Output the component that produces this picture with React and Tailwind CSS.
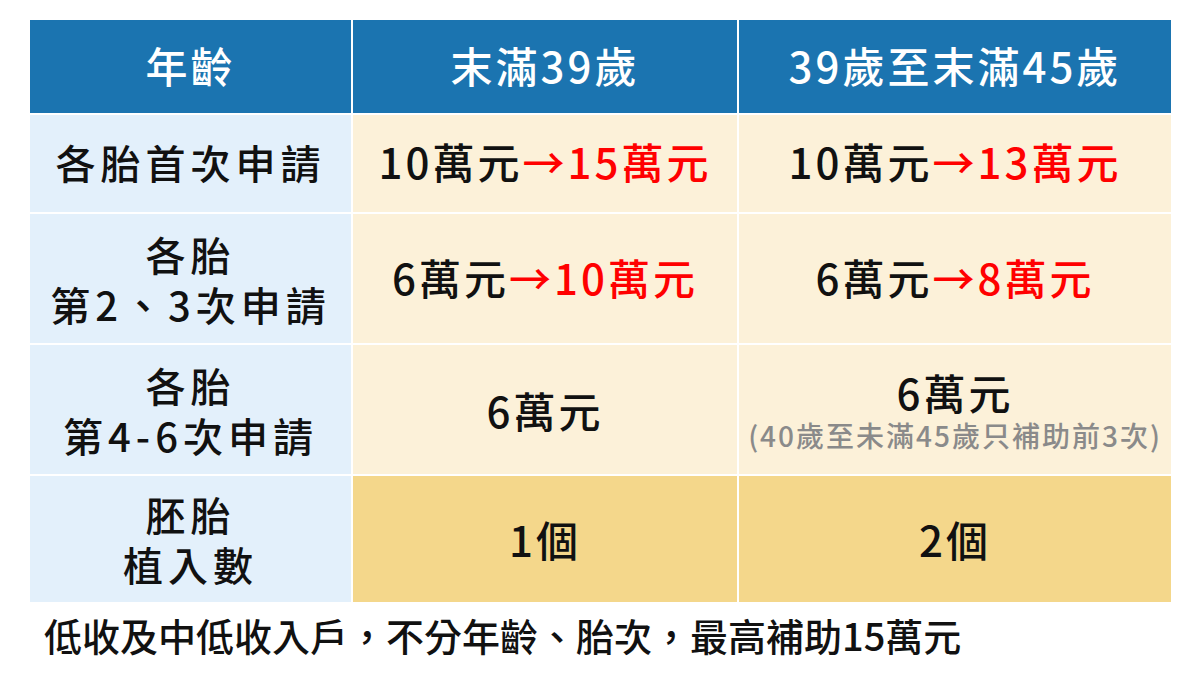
const font = { fontFamily: '"Noto Sans CJK TC", "Noto Sans", sans-serif' }

function Cell({ className = '', children }) {
  return (
    <div className={`flex flex-col items-center justify-center text-center ${className}`}>
      {children}
    </div>
  )
}

function Change({ from, to }) {
  return (
    <span>
      {from}
      <span className="text-[#ff0000]">→{to}</span>
    </span>
  )
}

// value / header cells are a touch larger than the first column
const big = 'text-[42px] tracking-[3px]'

export default function App() {
  return (
    <div lang="zh-Hant-TW" className="h-[675px] w-[1200px] bg-white pt-[20px] pl-[30px]" style={font}>
      <div className="grid w-[1141px] grid-cols-[321px_384px_432px] grid-rows-[93px_97px_129px_129px_126px] gap-[2px] text-[40px] font-medium leading-[50px] tracking-[2px] text-[#111]">
        <Cell className={`bg-[#1b74b0] pb-[4px] text-white ${big}`}>年齡</Cell>
        <Cell className={`bg-[#1b74b0] pb-[4px] text-white ${big}`}>末滿39歲</Cell>
        <Cell className={`bg-[#1b74b0] pb-[4px] text-white ${big}`}>39歲至末滿45歲</Cell>

        <Cell className="bg-[#e3f0fb] pb-[4px] tracking-[5px]">各胎首次申請</Cell>
        <Cell className={`bg-[#fcf1d9] pb-[6px] ${big}`}><Change from="10萬元" to="15萬元" /></Cell>
        <Cell className={`bg-[#fcf1d9] pb-[6px] ${big}`}><Change from="10萬元" to="13萬元" /></Cell>

        <Cell className="bg-[#e3f0fb] tracking-[5px]">
          <div>各胎</div>
          <div>第2、3次申請</div>
        </Cell>
        <Cell className={`bg-[#fcf1d9] pb-[4px] ${big}`}><Change from="6萬元" to="10萬元" /></Cell>
        <Cell className={`bg-[#fcf1d9] pb-[4px] ${big}`}><Change from="6萬元" to="8萬元" /></Cell>

        <Cell className="bg-[#e3f0fb] tracking-[5px]">
          <div>各胎</div>
          <div>第4-6次申請</div>
        </Cell>
        <Cell className={`bg-[#fcf1d9] ${big}`}>6萬元</Cell>
        <Cell className="bg-[#fcf1d9]">
          <div className={big}>6萬元</div>
          <div className="text-[28px] leading-[36px] tracking-[2px] text-[#8a8a8a]">(40歲至未滿45歲只補助前3次)</div>
        </Cell>

        <Cell className="bg-[#e3f0fb] tracking-[5px]">
          <div>胚胎</div>
          <div>植入數</div>
        </Cell>
        <Cell className={`bg-[#f4d78b] ${big}`}>1個</Cell>
        <Cell className={`bg-[#f4d78b] ${big}`}>2個</Cell>
      </div>
      <div className="mt-[10px] pl-[14px] text-[38px] font-medium leading-[46px] text-[#111]">
        低收及中低收入戶，不分年齡、胎次，最高補助15萬元
      </div>
    </div>
  )
}
